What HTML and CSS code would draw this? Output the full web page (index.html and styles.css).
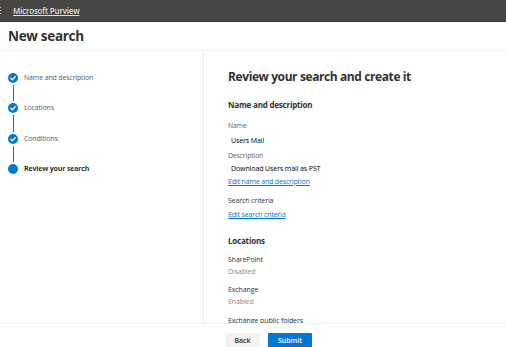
FILE: index.html
```html
<!DOCTYPE html>
<html lang="en">
<head>
<meta charset="utf-8">
<title>New search</title>
<link rel="stylesheet" href="styles.css">
</head>
<body>
<div class="page">
  <header class="topbar">
    <span class="waffle"><i></i><i></i><i></i></span>
    <a class="brand" href="#">Microsoft Purview</a>
  </header>
  <div class="titlebar"><h1>New search</h1></div>
  <div class="main">
    <nav class="steps">
      <div class="step done">
        <span class="dot"><svg viewBox="0 0 10 10" width="10" height="10"><path d="M2.8 5.2 L4.4 6.7 L7.3 3.6" fill="none" stroke="#fff" stroke-width="1.3" stroke-linecap="round" stroke-linejoin="round"/></svg></span>
        <span class="label">Name and description</span>
      </div>
      <div class="line"></div>
      <div class="step done">
        <span class="dot"><svg viewBox="0 0 10 10" width="10" height="10"><path d="M2.8 5.2 L4.4 6.7 L7.3 3.6" fill="none" stroke="#fff" stroke-width="1.3" stroke-linecap="round" stroke-linejoin="round"/></svg></span>
        <span class="label">Locations</span>
      </div>
      <div class="line"></div>
      <div class="step done">
        <span class="dot"><svg viewBox="0 0 10 10" width="10" height="10"><path d="M2.8 5.2 L4.4 6.7 L7.3 3.6" fill="none" stroke="#fff" stroke-width="1.3" stroke-linecap="round" stroke-linejoin="round"/></svg></span>
        <span class="label">Conditions</span>
      </div>
      <div class="line"></div>
      <div class="step current">
        <span class="dot"></span>
        <span class="label">Review your search</span>
      </div>
    </nav>
    <section class="content">
      <h2>Review your search and create it</h2>
      <h3 class="sec-first">Name and description</h3>
      <div class="lbl lbl-first">Name</div>
      <div class="val">Users Mail</div>
      <div class="lbl">Description</div>
      <div class="val val-tight">Download Users mail as PST</div>
      <a class="link link-tight" href="#">Edit name and description</a>
      <div class="field-title crit">Search criteria</div>
      <a class="link link-crit" href="#">Edit search criteria</a>
      <h3 class="sec-loc">Locations</h3>
      <div class="field-title loc-first">SharePoint</div>
      <div class="state">Disabled</div>
      <div class="field-title loc">Exchange</div>
      <div class="state">Enabled</div>
      <div class="field-title loc-last">Exchange public folders</div>
    </section>
  </div>
  <footer class="footer">
    <button class="btn btn-back" type="button">Back</button>
    <button class="btn btn-submit" type="button">Submit</button>
  </footer>
</div>
</body>
</html>
```
FILE: styles.css
```css
* { box-sizing: border-box; }
html, body { margin: 0; padding: 0; }
body {
  width: 506px;
  height: 347px;
  overflow: hidden;
  background: #fff;
  font-family: "Open Sans", "Noto Sans", "Liberation Sans", sans-serif;
  color: #323130;
}
.page { display: flex; flex-direction: column; height: 347px; }

.topbar {
  height: 22px;
  flex: none;
  background: #484644;
  border-bottom: 1px solid #3a3938;
  display: flex;
  align-items: center;
  gap: 11px;
}
.waffle { display: flex; flex-direction: column; gap: 2px; width: 2px; }
.waffle i { display: block; width: 1px; height: 1px; background: #c8c6c4; }
.brand {
  color: #e1dfdd;
  font-size: 8px;
  font-weight: 600;
  text-decoration: underline;
  letter-spacing: -0.2px;
}

.titlebar { height: 28px; flex: none; padding-left: 8px; display: flex; align-items: center; }
.titlebar h1 { margin: 0; font-size: 13.5px; font-weight: 700; color: #323130; letter-spacing: -0.3px; line-height: 20px; }

.main {
  height: 273px;
  flex: none;
  display: flex;
  border-top: 1px solid #f3f2f1;
  overflow: hidden;
}
.steps {
  width: 204px;
  flex: none;
  border-right: 1px solid #edebe9;
  padding: 22px 0 0 8px;
  display: flex;
  flex-direction: column;
}
.step { display: flex; align-items: center; height: 10px; gap: 6px; }
.dot {
  width: 10px; height: 10px; border-radius: 50%;
  background: #0078d4; flex: none; display: block;
}
.dot svg { display: block; }
.label { font-size: 7px; color: #605e5c; line-height: 10px; letter-spacing: -0.15px; }
.current .label { color: #323130; font-weight: 700; }
.line { width: 1px; height: 16.4px; margin: 2px 0 2px 4.5px; background: #0078d4; flex: none; }

.content {
  flex: 1;
  padding: 17px 0 0 24px;
  display: flex;
  flex-direction: column;
  align-items: flex-start;
}
.content h2 { margin: 0; font-size: 12px; font-weight: 700; line-height: 18px; color: #323130; letter-spacing: -0.4px; }
.content h3 { margin: 0; font-size: 8px; font-weight: 700; line-height: 13px; color: #323130; letter-spacing: -0.2px; }
.sec-first { margin-top: 12px !important; }
.lbl { font-size: 6.8px; line-height: 12px; color: #605e5c; margin-top: 3px; letter-spacing: -0.1px; }
.lbl-first { margin-top: 9px; }
.val { font-size: 7px; line-height: 12px; color: #000; padding-left: 3px; margin-top: 3px; letter-spacing: -0.1px; }
.val-tight { margin-top: 1px; }
.link { font-size: 7px; line-height: 12px; color: #0078d4; text-decoration: underline; margin-top: 1px; letter-spacing: -0.15px; }
.link-crit { margin-top: 2px; }
.field-title { font-size: 7px; line-height: 12px; color: #323130; letter-spacing: -0.1px; }
.crit { margin-top: 7px; }
.sec-loc { margin-top: 13px !important; }
.loc-first { margin-top: 7px; }
.loc { margin-top: 6px; }
.loc-last { margin-top: 7px; }
.state { font-size: 7px; line-height: 12px; color: #8a8886; letter-spacing: -0.1px; }

.footer {
  flex: 1;
  border-top: 1px solid #f3f2f1;
  display: flex;
  align-items: flex-start;
  padding: 9px 0 0 225px;
  gap: 8px;
}
.btn {
  font-family: inherit;
  font-size: 7px;
  font-weight: 600;
  height: 16px;
  border: 0;
  border-radius: 1px;
  padding: 0;
  line-height: 16px;
}
.btn-back { width: 35px; background: #f3f2f1; color: #323130; }
.btn-submit { width: 44px; background: #0078d4; color: #fff; }
```
